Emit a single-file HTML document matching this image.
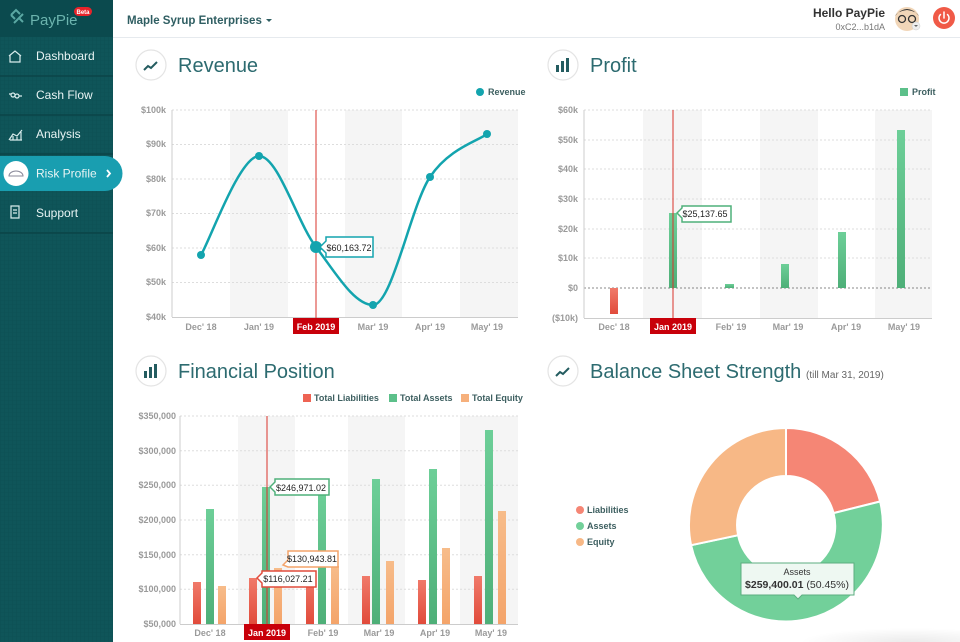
<!DOCTYPE html>
<html><head><meta charset="utf-8"><style>
html,body{margin:0;padding:0;width:960px;height:642px;overflow:hidden;background:#fff}
svg{display:block;font-family:"Liberation Sans",sans-serif}
.ax{font-size:9px;font-weight:bold;fill:#9a9a9a}
.axr{font-size:9px;font-weight:bold;fill:#9a9a9a;text-anchor:end}
.axm{font-size:9px;font-weight:bold;fill:#9a9a9a;text-anchor:middle}
.grid{stroke:#ddd;stroke-dasharray:2 2;stroke-width:1}
.ttl{font-size:20px;fill:#2d6b70}
.leg{font-size:9px;font-weight:bold;fill:#3d5f60}
.menu{font-size:12px;fill:#e8f4f4}
</style></head><body>
<svg width="960" height="642" viewBox="0 0 960 642" xmlns="http://www.w3.org/2000/svg">
<defs>
<pattern id="gp" width="4" height="4" patternUnits="userSpaceOnUse"><rect width="4" height="4" fill="#0f5559"/><path d="M0 0H4M0 0V4" stroke="#0c4d51" stroke-width="0.6"/></pattern>
<linearGradient id="gg" x1="0" y1="0" x2="0" y2="1"><stop offset="0" stop-color="#6dcf98"/><stop offset="1" stop-color="#4eaf78"/></linearGradient>
<linearGradient id="rg" x1="0" y1="0" x2="0" y2="1"><stop offset="0" stop-color="#f07a6a"/><stop offset="1" stop-color="#e14b3b"/></linearGradient>
<linearGradient id="og" x1="0" y1="0" x2="0" y2="1"><stop offset="0" stop-color="#f7bc8a"/><stop offset="1" stop-color="#f4a46a"/></linearGradient>
<radialGradient id="sh" cx="0.5" cy="0.5" r="0.5"><stop offset="0" stop-color="#000" stop-opacity="0.08"/><stop offset="1" stop-color="#000" stop-opacity="0"/></radialGradient>
</defs>

<rect x="0" y="0" width="113" height="642" fill="url(#gp)"/>
<rect x="0" y="0" width="113" height="37" fill="#0b4a4e"/>
<path d="M11 15l5-5 4 4M14 23l5-5 4 4M11 15l4 4M19 18l4-4" fill="none" stroke="#5aa8a3" stroke-width="2"/>
<text x="30" y="25" font-size="15" fill="#6cb4ae">PayPie</text>
<rect x="74" y="7" width="18" height="9" rx="4.5" fill="#e8232a"/>
<text x="83" y="14" font-size="6" font-weight="bold" fill="#fff" text-anchor="middle">Beta</text>
<g stroke="#0a4245" stroke-width="1.2"><line x1="0" y1="76" x2="113" y2="76"/><line x1="0" y1="115" x2="113" y2="115"/><line x1="0" y1="154" x2="113" y2="154"/><line x1="0" y1="233" x2="113" y2="233"/></g>
<path d="M9 56l6-5 6 5M10 55v7h10v-7" fill="none" stroke="#d8ecec" stroke-width="1.2"/>
<text x="36" y="60" class="menu">Dashboard</text>
<g fill="none" stroke="#d8ecec" stroke-width="1.2"><circle cx="13" cy="95" r="2"/><circle cx="17" cy="96" r="2"/><path d="M9 94h2M19 96h3"/></g>
<text x="36" y="99" class="menu">Cash Flow</text>
<path d="M9 140l4-6 4 2 5-6M10 140h12M13 136v4M17 137v3M21 132v8" fill="none" stroke="#d8ecec" stroke-width="1.2"/>
<text x="36" y="138" class="menu">Analysis</text>
<path d="M0 156H105a17.5 17.5 0 0 1 0 35H0z" fill="#199eb0"/>
<circle cx="16" cy="173.5" r="12.5" fill="#fff"/>
<path d="M9 176a7 5 0 0 1 14 0z" fill="none" stroke="#889" stroke-width="1"/>
<text x="36" y="177.5" class="menu" fill="#fff">Risk Profile</text>
<path d="M107 170l3 3.5-3 3.5" fill="none" stroke="#fff" stroke-width="1.8"/>
<path d="M11 206h8v12h-8zM13 210h4M13 213h4" fill="none" stroke="#d8ecec" stroke-width="1.2"/>
<text x="36" y="217" class="menu">Support</text>

<line x1="113" y1="37.5" x2="960" y2="37.5" stroke="#e6eaee"/>
<text x="127" y="24" font-size="11.5" font-weight="bold" fill="#2f5e62">Maple Syrup Enterprises</text>
<path d="M266 19l3 3 3-3z" fill="#2f5e62"/>
<text x="885" y="17" font-size="12" font-weight="bold" fill="#333" text-anchor="end">Hello PayPie</text>
<text x="885" y="30" font-size="9" fill="#777" text-anchor="end">0xC2...b1dA</text>
<circle cx="907" cy="19" r="12" fill="#f1d6b8"/>
<path d="M895 16q12-14 24 0q-3-5-12-6q-9 1-12 6z" fill="#333"/>
<g fill="none" stroke="#333" stroke-width="1.3"><circle cx="902" cy="19" r="3.5"/><circle cx="912" cy="19" r="3.5"/></g>
<circle cx="916" cy="26" r="4" fill="#eee" stroke="#ccc" stroke-width=".5"/><path d="M914 25h4l-2 2z" fill="#666"/>
<circle cx="944" cy="18" r="11" fill="#f05a47"/>
<path d="M940.5 14.5a5 5 0 1 0 7 0M944 12v6" fill="none" stroke="#fff" stroke-width="1.5" stroke-linecap="round"/>

<g fill="#fff" stroke="#e4e4e4" stroke-width="1.2">
<circle cx="151" cy="65" r="15"/><circle cx="563" cy="65" r="15"/><circle cx="151" cy="371" r="15"/><circle cx="563" cy="371" r="15"/></g>
<path d="M144 70l4-4 3 2 6-6" fill="none" stroke="#245c60" stroke-width="2"/>
<path d="M556 376l4-4 3 2 6-6" fill="none" stroke="#245c60" stroke-width="2"/>
<g fill="#245c60"><rect x="556" y="65" width="3" height="7"/><rect x="561" y="61" width="3" height="11"/><rect x="566" y="58" width="3" height="14"/>
<rect x="144" y="371" width="3" height="7"/><rect x="149" y="367" width="3" height="11"/><rect x="154" y="364" width="3" height="14"/></g>
<text x="178" y="72" class="ttl">Revenue</text>
<text x="590" y="72" class="ttl">Profit</text>
<text x="178" y="378" class="ttl">Financial Position</text>
<text x="590" y="378" class="ttl">Balance Sheet Strength</text>
<text x="806" y="378" font-size="10" fill="#666">(till Mar 31, 2019)</text>

<g fill="#f5f5f5"><rect x="230" y="110" width="58" height="207"/><rect x="345" y="110" width="57" height="207"/><rect x="460" y="110" width="58" height="207"/></g>
<g class="grid"><line x1="172" y1="110" x2="518" y2="110"/><line x1="172" y1="144.5" x2="518" y2="144.5"/><line x1="172" y1="179" x2="518" y2="179"/><line x1="172" y1="213.5" x2="518" y2="213.5"/><line x1="172" y1="248" x2="518" y2="248"/><line x1="172" y1="282.5" x2="518" y2="282.5"/></g>
<line x1="172" y1="110" x2="172" y2="317" stroke="#ccc"/><line x1="172" y1="317.5" x2="518" y2="317.5" stroke="#ccc"/>
<text x="166" y="113" class="axr">$100k</text><text x="166" y="147" class="axr">$90k</text><text x="166" y="182" class="axr">$80k</text><text x="166" y="216" class="axr">$70k</text><text x="166" y="251" class="axr">$60k</text><text x="166" y="285" class="axr">$50k</text><text x="166" y="320" class="axr">$40k</text>
<text x="201" y="330" class="axm">Dec' 18</text><text x="259" y="330" class="axm">Jan' 19</text><text x="373" y="330" class="axm">Mar' 19</text><text x="430" y="330" class="axm">Apr' 19</text><text x="487" y="330" class="axm">May' 19</text>
<line x1="316" y1="110" x2="316" y2="318" stroke="#d9332b"/>
<path d="M201 255C210.7 238.5 239.8 156 259 156C278.2 156 297 222.2 316 247C335 271.8 354 305 373 305C392 305 411 205.5 430 177C449 148.5 477.5 141.2 487 134" fill="none" stroke="#13a4ae" stroke-width="2.5"/>
<g fill="#13a4ae"><circle cx="201" cy="255" r="4"/><circle cx="259" cy="156" r="4"/><circle cx="316" cy="247" r="6"/><circle cx="373" cy="305" r="4"/><circle cx="430" cy="177" r="4"/><circle cx="487" cy="134" r="4"/><circle cx="480" cy="92" r="4"/></g>
<text x="488" y="95" class="leg">Revenue</text>
<rect x="293" y="318" width="46" height="16" fill="#c8000a"/>
<text x="316" y="330" font-size="9" font-weight="bold" fill="#fff" text-anchor="middle">Feb 2019</text>
<path d="M320 247l6-6v-4h47v20h-47v-4z" fill="#fff" stroke="#13a4ae" stroke-width="1.5"/>
<text x="349" y="251" font-size="9" fill="#222" text-anchor="middle">$60,163.72</text>

<g fill="#f5f5f5"><rect x="643" y="110" width="59" height="208"/><rect x="760" y="110" width="58" height="208"/><rect x="875" y="110" width="57" height="208"/></g>
<g class="grid"><line x1="584" y1="110" x2="932" y2="110"/><line x1="584" y1="140" x2="932" y2="140"/><line x1="584" y1="169" x2="932" y2="169"/><line x1="584" y1="199" x2="932" y2="199"/><line x1="584" y1="229" x2="932" y2="229"/><line x1="584" y1="258" x2="932" y2="258"/></g>
<line x1="584" y1="288" x2="932" y2="288" stroke="#888" stroke-dasharray="2 2"/>
<line x1="584" y1="110" x2="584" y2="318" stroke="#ccc"/><line x1="584" y1="318.5" x2="932" y2="318.5" stroke="#ccc"/>
<text x="578" y="113" class="axr">$60k</text><text x="578" y="143" class="axr">$50k</text><text x="578" y="172" class="axr">$40k</text><text x="578" y="202" class="axr">$30k</text><text x="578" y="232" class="axr">$20k</text><text x="578" y="261" class="axr">$10k</text><text x="578" y="291" class="axr">$0</text><text x="578" y="321" class="axr">($10k)</text>
<text x="614" y="330" class="axm">Dec' 18</text><text x="731" y="330" class="axm">Feb' 19</text><text x="788" y="330" class="axm">Mar' 19</text><text x="846" y="330" class="axm">Apr' 19</text><text x="904" y="330" class="axm">May' 19</text>
<rect x="610" y="288" width="8" height="26" fill="url(#rg)"/>
<g fill="url(#gg)"><rect x="669" y="213" width="8" height="75"/><rect x="725" y="284" width="9" height="4"/><rect x="781" y="264" width="8" height="24"/><rect x="838" y="232" width="8" height="56"/><rect x="897" y="130" width="8" height="158"/></g>
<line x1="673" y1="110" x2="673" y2="318" stroke="#d9332b"/>
<rect x="650" y="318" width="46" height="16" fill="#c8000a"/>
<text x="673" y="330" font-size="9" font-weight="bold" fill="#fff" text-anchor="middle">Jan 2019</text>
<path d="M677 213l5-5v-2h49v16h-49v-4z" fill="#fff" stroke="#4fb07a" stroke-width="1.5"/>
<text x="705" y="217" font-size="9" fill="#222" text-anchor="middle">$25,137.65</text>
<rect x="900" y="88" width="8" height="8" fill="#5cc08a"/><text x="912" y="95" class="leg">Profit</text>

<g fill="#f5f5f5"><rect x="238" y="416" width="57" height="208"/><rect x="348" y="416" width="57" height="208"/><rect x="460" y="416" width="58" height="208"/></g>
<g class="grid"><line x1="180" y1="416" x2="518" y2="416"/><line x1="180" y1="450.7" x2="518" y2="450.7"/><line x1="180" y1="485.3" x2="518" y2="485.3"/><line x1="180" y1="520" x2="518" y2="520"/><line x1="180" y1="554.7" x2="518" y2="554.7"/><line x1="180" y1="589.3" x2="518" y2="589.3"/></g>
<line x1="180" y1="416" x2="180" y2="624" stroke="#ccc"/><line x1="180" y1="624.5" x2="518" y2="624.5" stroke="#ccc"/>
<text x="176" y="419" class="axr">$350,000</text><text x="176" y="454" class="axr">$300,000</text><text x="176" y="488" class="axr">$250,000</text><text x="176" y="523" class="axr">$200,000</text><text x="176" y="558" class="axr">$150,000</text><text x="176" y="592" class="axr">$100,000</text><text x="176" y="627" class="axr">$50,000</text>
<text x="210" y="636" class="axm">Dec' 18</text><text x="323" y="636" class="axm">Feb' 19</text><text x="379" y="636" class="axm">Mar' 19</text><text x="435" y="636" class="axm">Apr' 19</text><text x="491" y="636" class="axm">May' 19</text>
<g fill="url(#rg)"><rect x="193" y="582" width="8" height="42"/><rect x="249" y="578" width="8" height="46"/><rect x="306" y="575" width="8" height="49"/><rect x="362" y="576" width="8" height="48"/><rect x="418" y="580" width="8" height="44"/><rect x="474" y="576" width="8" height="48"/></g>
<g fill="url(#gg)"><rect x="206" y="509" width="8" height="115"/><rect x="262" y="487" width="8" height="137"/><rect x="318" y="491" width="8" height="133"/><rect x="372" y="479" width="8" height="145"/><rect x="429" y="469" width="8" height="155"/><rect x="485" y="430" width="8" height="194"/></g>
<g fill="url(#og)"><rect x="218" y="586" width="8" height="38"/><rect x="274" y="568" width="8" height="56"/><rect x="331" y="566" width="8" height="58"/><rect x="386" y="561" width="8" height="63"/><rect x="442" y="548" width="8" height="76"/><rect x="498" y="511" width="8" height="113"/></g>
<line x1="267" y1="416" x2="267" y2="624" stroke="#d9332b"/>
<rect x="244" y="624" width="46" height="16" fill="#c8000a"/>
<text x="267" y="636" font-size="9" font-weight="bold" fill="#fff" text-anchor="middle">Jan 2019</text>
<path d="M270 487l5-5v-3h54v16h-54v-3z" fill="#fff" stroke="#4fb07a" stroke-width="1.5"/>
<text x="301" y="491" font-size="9" fill="#222" text-anchor="middle">$246,971.02</text>
<path d="M283 565l5-5v-9h50v16h-50z" fill="#fff" stroke="#f4a46a" stroke-width="1.5"/>
<text x="312" y="562" font-size="9" fill="#222" text-anchor="middle">$130,943.81</text>
<path d="M257 578l5-5v-2h54v16h-54v-4z" fill="#fff" stroke="#e14b3b" stroke-width="1.5"/>
<text x="288" y="582" font-size="9" fill="#222" text-anchor="middle">$116,027.21</text>
<rect x="303" y="394" width="8" height="8" fill="#ee6353"/><text x="314" y="401" class="leg">Total Liabilities</text>
<rect x="389" y="394" width="8" height="8" fill="#5cc08a"/><text x="400" y="401" class="leg">Total Assets</text>
<rect x="461" y="394" width="8" height="8" fill="#f6b07c"/><text x="472" y="401" class="leg">Total Equity</text>

<ellipse cx="910" cy="642" rx="110" ry="14" fill="url(#sh)"/>
<g stroke="#fff" stroke-width="2">
<path d="M786 428A97 97 0 0 1 880.1 501.5L833.5 513.1A49 49 0 0 0 786 476Z" fill="#f58675"/>
<path d="M880.1 501.5A97 97 0 1 1 691.1 545.2L738.1 535.2A49 49 0 1 0 833.5 513.1Z" fill="#72d09a"/>
<path d="M691.1 545.2A97 97 0 0 1 786 428L786 476A49 49 0 0 0 738.1 535.2Z" fill="#f7b886"/>
</g>
<path d="M741 563h113v32h-52l-4 4-4-4h-53z" fill="#eef8f2" stroke="#5cae80" stroke-width="1"/>
<text x="797" y="575" font-size="9" fill="#333" text-anchor="middle">Assets</text>
<text x="797" y="588" font-size="10.5" fill="#333" text-anchor="middle"><tspan font-weight="bold">$259,400.01</tspan> (50.45%)</text>
<circle cx="580" cy="510" r="4" fill="#f58675"/><text x="587" y="513" class="leg">Liabilities</text>
<circle cx="580" cy="526" r="4" fill="#72d09a"/><text x="587" y="529" class="leg">Assets</text>
<circle cx="580" cy="542" r="4" fill="#f7b886"/><text x="587" y="545" class="leg">Equity</text>
</svg>
</body></html>
